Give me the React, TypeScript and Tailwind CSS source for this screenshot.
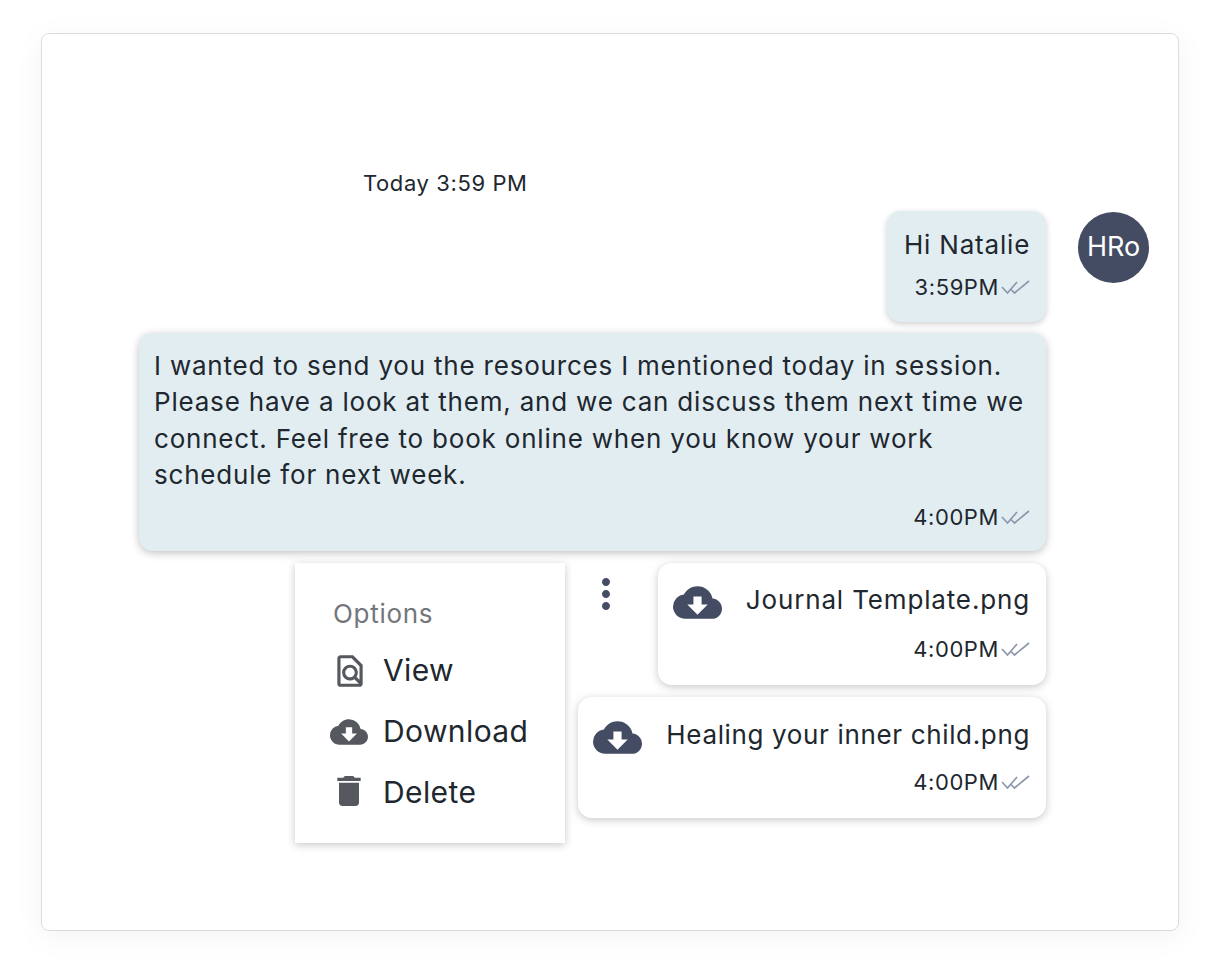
// Chat thread card with file attachments and an open options menu.

import { MdCloudDownload, MdDelete, MdMoreVert, MdOutlineFindInPage } from "react-icons/md";

function DoubleCheck() {
  return (
    <svg width="31" height="16" viewBox="0 0 31 16" fill="none" stroke="#8c97ab" strokeWidth="1.7" className="shrink-0">
      <path d="M3 8l5.5 6L18 3" />
      <path d="M12 10.5l3.5 3.5L30 2" />
    </svg>
  );
}

function Stamp({ time }: { time: string }) {
  return (
    <div className="flex items-center justify-end text-[22px] leading-[30px] tracking-[0.6px] text-[#20272e]">
      <span>{time}</span>
      <DoubleCheck />
    </div>
  );
}

function FileBubble({ name, box, gap, spacing }: { name: string; box: string; gap: string; spacing: string }) {
  return (
    <div className={`${box} rounded-[14px] bg-white pl-[15px] pr-[16px] shadow-[0_2px_8px_rgba(0,0,0,0.22)]`}>
      <div className="flex items-center justify-between">
        <MdCloudDownload className="mt-[6px] text-[#434c63]" size={49} />
        <span className={`${spacing} text-[26px] leading-[36px] text-[#20272e]`}>{name}</span>
      </div>
      <div className={gap}>
        <Stamp time="4:00PM" />
      </div>
    </div>
  );
}

export default function App() {
  return (
    <div className="h-[980px] bg-white px-[41px] pt-[33px] font-['Inter',sans-serif]">
      <div className="relative flex h-[898px] justify-end gap-[32px] rounded-[8px] border border-[#dcdcdc] bg-white pr-[29px] pt-[135px] shadow-[0_6px_30px_rgba(0,0,0,0.05)]">
        <div className="flex w-[907px] flex-col items-end">
          <div className="mb-[14px] h-[28px] w-full pl-[224px] text-[22px] leading-[28px] tracking-[0.6px] text-[#20272e]">
            Today 3:59 PM
          </div>

          <div className="h-[111px] w-[159px] rounded-[14px] bg-[#e2edf2] pl-[17px] pr-[16px] pt-[16px] shadow-[0_2px_6px_rgba(0,0,0,0.2)]">
            <div className="whitespace-nowrap text-[26px] leading-[36px] tracking-[0.8px] text-[#20272e]">Hi Natalie</div>
            <div className="mt-[9px]">
              <Stamp time="3:59PM" />
            </div>
          </div>

          <div className="mt-[11px] h-[218px] w-[907px] rounded-[14px] bg-[#e2edf2] pl-[15px] pr-[16px] pt-[15px] shadow-[0_2px_8px_rgba(0,0,0,0.25)]">
            <p className="text-[26px] leading-[36.3px] tracking-[0.8px] text-[#20272e]">
              I wanted to send you the resources I mentioned today in session.
              <br />
              Please have a look at them, and we can discuss them next time we
              <br />
              connect. Feel free to book online when you know your work
              <br />
              schedule for next week.
            </p>
            <div className="mt-[9px]">
              <Stamp time="4:00PM" />
            </div>
          </div>

          <div className="mt-[12px] flex items-start gap-[28px]">
            <MdMoreVert className="mt-[7px] text-[#434c63]" size={48} />
            <FileBubble name="Journal Template.png" box="h-[122px] w-[388px] pt-[9px]" gap="mt-[7px]" spacing="tracking-[0.85px]" />
          </div>
          <div className="mt-[12px]">
            <FileBubble name="Healing your inner child.png" box="h-[121px] w-[468px] pt-[10px]" gap="mt-[5px]" spacing="tracking-[0.65px]" />
          </div>
        </div>

        <div className="mt-[43px] flex h-[71px] w-[71px] items-center justify-center rounded-full bg-[#434c63] text-[27px] text-white">
          HRo
        </div>

        {/* Options menu sits over the thread */}
        <div className="absolute left-[253px] top-[529px] h-[280px] w-[270px] bg-white pl-[38px] pt-[33px] shadow-[0_2px_8px_rgba(0,0,0,0.22)]">
          <div className="text-[26px] leading-[36px] tracking-[0.7px] text-[#73767a]">Options</div>
          <ul className="mt-[20px] flex flex-col gap-[24px] text-[30px] leading-[37px] tracking-[0.4px] text-[#20272e]">
            <li className="flex h-[37px] items-center">
              <span className="-ml-[2px] flex w-[52px]">
                <MdOutlineFindInPage className="text-[#55585e]" size={38} />
              </span>
              View
            </li>
            <li className="flex h-[37px] items-center">
              <span className="-ml-[3px] flex w-[53px]">
                <MdCloudDownload className="text-[#55585e]" size={38} />
              </span>
              Download
            </li>
            <li className="flex h-[37px] items-center">
              <span className="-ml-[4px] flex w-[54px]">
                <MdDelete className="-mt-[4px] text-[#55585e]" size={40} />
              </span>
              Delete
            </li>
          </ul>
        </div>
      </div>
    </div>
  );
}
